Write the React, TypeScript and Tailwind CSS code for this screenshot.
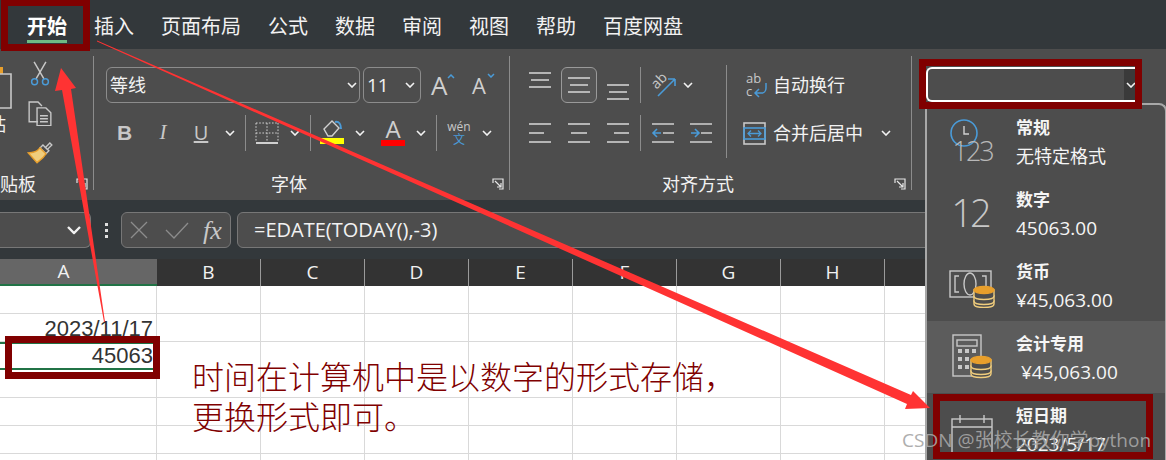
const cols = ["B", "C", "D", "E", "F", "G", "H", "I", "J", "K"];

function Chevron({ className = "" }: { className?: string }) {
  return (
    <svg width="10" height="6" viewBox="0 0 10 6" className={className} fill="none" stroke="#f2f2f2" strokeWidth="1.6">
      <path d="M1 1l4 4 4-4" />
    </svg>
  );
}

function Lines({ rows }: { rows: number[][] }) {
  return (
    <svg width="24" height="24" viewBox="0 0 24 24" stroke="#d0d0d0" strokeWidth="1.6">
      {rows.map((r, i) => (
        <line key={i} x1={r[0]} x2={r[1]} y1={r[2]} y2={r[2]} />
      ))}
    </svg>
  );
}

function Launcher() {
  return (
    <svg width="12" height="12" viewBox="0 0 12 12" fill="none" stroke="#e6e6e6" strokeWidth="1.2">
      <path d="M1 5V1h10v10H7" />
      <path d="M3 3l6 6M9 5v4H5" />
    </svg>
  );
}

function Coins({ x, y }: { x: number; y: number }) {
  return (
    <g transform={`translate(${x} ${y})`} stroke="#f0cd7d" strokeWidth="1.4" fill="#4d4d4d">
      <path d="M0 15v3c0 2 4 3.5 10 3.5S20 20 20 18v-3z" />
      <path d="M0 10v5c0 2 4 3.5 10 3.5S20 17 20 15v-5z" />
      <path d="M0 4v6c0 2 4 3.5 10 3.5S20 12 20 10V4z" />
      <ellipse cx="10" cy="4" rx="10" ry="3.6" fill="#e89f2c" stroke="#e89f2c" />
    </g>
  );
}

function MenuItem({ icon, title, sub, hi, cjk }: { icon: React.ReactNode; title: string; sub: string; hi?: boolean; cjk?: boolean }) {
  return (
    <div className={`flex h-[72px] ${hi ? "bg-[#5c5c5c]" : ""}`}>
      <div className="w-[89px] flex justify-center items-center shrink-0">{icon}</div>
      <div className="pt-[10px] text-[#f5f5f5] whitespace-pre">
        <div className="text-[17px] font-bold leading-[26px]">{title}</div>
        <div className={`${cjk ? "text-[18px]" : "text-[19px]"} leading-[30px]`}>{sub}</div>
      </div>
    </div>
  );
}

function RedBox({ className }: { className: string }) {
  return <div className={`absolute border-[7px] border-[#800000] ${className}`} />;
}

export default function App() {
  return (
    <div className="relative w-[1166px] h-[460px] overflow-hidden bg-white font-['Open_Sans','Noto_Sans_CJK_SC',sans-serif]">
      {/* tab strip */}
      <div className="h-[49px] bg-[#33383b] flex items-center gap-[27px] pl-[27px] pt-[5px] text-[20px] text-[#f2f2f2]">
        <div className="relative font-bold text-white">
          开始
          <div className="absolute left-0 right-0 -bottom-[1px] h-[3px] bg-[#6fbb84]" />
        </div>
        {["插入", "页面布局", "公式", "数据", "审阅", "视图", "帮助", "百度网盘"].map((t) => (
          <div key={t}>{t}</div>
        ))}
      </div>

      {/* ribbon */}
      <div className="h-[151px] bg-[#4d4d4d] flex pt-[7px] text-[#f2f2f2]">
        {/* clipboard */}
        <div className="w-[94px] h-[134px] border-r border-[#8c8c8c] flex flex-col shrink-0">
          <div className="flex h-[108px]">
            <div className="w-[27px] pt-[11px]">
              <svg width="12" height="42" viewBox="0 0 12 42" fill="none">
                <rect x="0" y="0" width="3" height="7" fill="#e89f2c" />
                <path d="M0 7h11v34H0" stroke="#c8c8c8" strokeWidth="1.6" />
              </svg>
              <div className="text-[18px] leading-[24px] -ml-[12px] mt-[3px]">贴</div>
            </div>
            <div className="flex flex-col items-center gap-[14px] pt-[5px]">
              <svg width="20" height="26" viewBox="0 0 20 26" fill="none" strokeWidth="1.5">
                <path d="M4 1l10 17M16 1L6 18" stroke="#c8c8c8" />
                <circle cx="4.5" cy="21" r="3" stroke="#4a9bd8" />
                <circle cx="15.5" cy="21" r="3" stroke="#4a9bd8" />
              </svg>
              <svg width="26" height="26" viewBox="0 0 26 26" fill="none" stroke="#c8c8c8" strokeWidth="1.4">
                <path d="M11 21H2V1h9l4 4" />
                <path d="M10 7h9l5 5v13H10z" />
                <path d="M13 15h8M13 18h8M13 21h8" />
              </svg>
              <svg width="26" height="24" viewBox="0 0 26 24" fill="none" strokeWidth="1.4">
                <path d="M18 8l5-5 2 2-5 5" stroke="#c8c8c8" />
                <path d="M16 5l6 6-3 3-6-6z" stroke="#c8c8c8" />
                <path d="M13 8l6 6c-3 5-7 7-9 9L1 13c4 0 9-1 12-5z" fill="#f0cd7d" stroke="#e89f2c" />
              </svg>
            </div>
          </div>
          <div className="flex items-center h-[24px] mt-[8px] text-[18px] whitespace-nowrap">
            <span>贴板</span>
            <span className="ml-[40px] flex">
              <Launcher />
            </span>
          </div>
        </div>

        {/* font */}
        <div className="w-[416px] h-[134px] border-r border-[#8c8c8c] flex flex-col shrink-0 pl-[12px] pt-[11px]">
          <div className="flex items-center h-[36px]">
            <div className="w-[254px] h-[36px] border border-[#8c8c8c] rounded-md flex items-center justify-between pl-[3px] pr-[2px] text-[18px]">
              <span>等线</span>
              <Chevron />
            </div>
            <div className="ml-[3px] w-[58px] h-[36px] border border-[#8c8c8c] rounded-md flex items-center justify-between pl-[3px] pr-[5px] text-[19px]">
              <span>11</span>
              <Chevron />
            </div>
            <div className="ml-[10px] w-[26px] text-[26px] text-[#d0d0d0] relative leading-none">
              A
              <svg width="8" height="5" viewBox="0 0 8 5" fill="none" stroke="#4a9bd8" strokeWidth="1.5" className="absolute left-[16px] top-[2px]">
                <path d="M1 4l3-3 3 3" />
              </svg>
            </div>
            <div className="ml-[15px] w-[26px] text-[22px] text-[#d0d0d0] relative leading-none">
              A
              <svg width="8" height="5" viewBox="0 0 8 5" fill="none" stroke="#4a9bd8" strokeWidth="1.5" className="absolute left-[15px] -top-[1px]">
                <path d="M1 1l3 3 3-3" />
              </svg>
            </div>
          </div>
          <div className="flex items-center h-[36px] mt-[12px] text-[#c8c8c8]">
            <div className="w-[37px] text-center font-bold text-[21px] font-['Liberation_Sans',sans-serif]">B</div>
            <div className="w-[40px] text-center italic text-[21px] font-['Liberation_Serif',serif]">I</div>
            <div className="w-[36px] text-center text-[20px] underline">U</div>
            <Chevron className="ml-[6px]" />
            <div className="w-px h-[36px] bg-[#8c8c8c] ml-[10px]" />
            <svg width="24" height="24" viewBox="0 0 24 24" fill="none" stroke="#d0d0d0" className="ml-[9px]">
              <path d="M1 2h22M1 12h22M1 2v19M12 2v19M23 2v19" strokeDasharray="1.6 1.6" />
              <path d="M1 22h22" strokeWidth="2" />
            </svg>
            <Chevron className="ml-[11px]" />
            <div className="w-px h-[36px] bg-[#8c8c8c] ml-[10px]" />
            <svg width="24" height="26" viewBox="0 0 24 26" fill="none" className="ml-[9px] -mt-[4px]">
              <path d="M4 11l8-8 7 7-7 8h-4z" stroke="#d0d0d0" strokeWidth="1.4" />
              <path d="M15 4c4-1 6 2 6 7" stroke="#4a9bd8" strokeWidth="2" />
              <rect x="0" y="20" width="24" height="6" fill="#ffff00" />
            </svg>
            <Chevron className="ml-[11px]" />
            <div className="relative ml-[16px] w-[24px] text-center text-[24px] leading-[26px] text-[#d0d0d0] h-[30px] -mt-[4px]">
              A
              <div className="absolute left-0 right-0 bottom-0 h-[6px] bg-[#ff0000]" />
            </div>
            <Chevron className="ml-[11px]" />
            <div className="w-px h-[36px] bg-[#8c8c8c] ml-[10px]" />
            <div className="ml-[10px] w-[24px] text-center leading-none">
              <div className="text-[12px] leading-[13px] text-[#c8c8c8]">wén</div>
              <div className="text-[12px] leading-[14px] text-[#4a9bd8]">文</div>
            </div>
            <Chevron className="ml-[11px]" />
          </div>
          <div className="flex items-center h-[24px] mt-[21px] text-[18px]">
            <div className="w-[366px] text-center">字体</div>
            <span className="ml-[20px] flex">
              <Launcher />
            </span>
          </div>
        </div>

        {/* alignment */}
        <div className="w-[402px] h-[134px] border-r border-[#8c8c8c] flex flex-col shrink-0 pl-[18px] pt-[11px]">
          <div className="flex h-[84px]">
            <div className="w-[199px] flex flex-col gap-[12px]">
              <div className="flex items-center h-[36px]">
                <div className="w-[24px] -mt-[10px]">
                  <Lines rows={[[1, 23, 5], [3, 21, 12], [1, 23, 19]]} />
                </div>
                <div className="ml-[9px] w-[36px] h-[36px] border border-[#9a9a9a] rounded-md flex items-center justify-center bg-[#555555]">
                  <Lines rows={[[1, 23, 5], [3, 21, 12], [1, 23, 19]]} />
                </div>
                <div className="ml-[9px] w-[24px] mt-[14px]">
                  <Lines rows={[[1, 23, 5], [3, 21, 12], [1, 23, 19]]} />
                </div>
                <div className="w-px h-[36px] bg-[#8c8c8c] ml-[10px]" />
                <svg width="26" height="26" viewBox="0 0 26 26" fill="none" className="ml-[9px]">
                  <path d="M8 24L25 7M25 7h-7M25 7v7" stroke="#4a9bd8" strokeWidth="1.6" />
                  <text x="3" y="15" fontSize="14" fill="#c8c8c8" transform="rotate(-45 8 12)">ab</text>
                </svg>
                <Chevron className="ml-[7px]" />
              </div>
              <div className="flex items-center h-[36px]">
                <Lines rows={[[1, 23, 3], [1, 16, 12], [1, 23, 21]]} />
                <div className="ml-[15px]">
                  <Lines rows={[[1, 23, 3], [4, 20, 12], [1, 23, 21]]} />
                </div>
                <div className="ml-[15px]">
                  <Lines rows={[[1, 23, 3], [8, 23, 12], [1, 23, 21]]} />
                </div>
                <div className="w-px h-[36px] bg-[#8c8c8c] ml-[10px]" />
                <svg width="24" height="24" viewBox="0 0 24 24" fill="none" className="ml-[10px]" strokeWidth="1.6">
                  <path d="M1 3h22M12 12h11M1 21h22" stroke="#d0d0d0" />
                  <path d="M10 12H2M6 8l-4 4 4 4" stroke="#4a9bd8" />
                </svg>
                <svg width="24" height="24" viewBox="0 0 24 24" fill="none" className="ml-[14px]" strokeWidth="1.6">
                  <path d="M1 3h22M12 12h11M1 21h22" stroke="#d0d0d0" />
                  <path d="M2 12h8M6 8l4 4-4 4" stroke="#4a9bd8" />
                </svg>
              </div>
            </div>
            <div className="w-px h-[93px] bg-[#8c8c8c] -mt-[2px] -ml-px" />
            <div className="pl-[16px] flex flex-col gap-[12px] text-[18px]">
              <div className="flex items-center h-[36px] gap-[5px] pl-[3px]">
                <svg width="22" height="26" viewBox="0 0 22 26" fill="none">
                  <text x="0" y="11" fontSize="13" fill="#c8c8c8">ab</text>
                  <text x="0" y="24" fontSize="13" fill="#c8c8c8">c</text>
                  <path d="M20 11v5c0 3-2 5-4 5H9M13 17l-4 4 4 4" stroke="#4a9bd8" strokeWidth="1.5" />
                </svg>
                <span>自动换行</span>
              </div>
              <div className="flex items-center h-[36px] gap-[7px]">
                <svg width="23" height="23" viewBox="0 0 23 23" fill="none">
                  <rect x="1" y="1" width="21" height="21" stroke="#c8c8c8" strokeWidth="1.6" />
                  <rect x="1" y="6" width="21" height="11" stroke="#4a9bd8" strokeWidth="1.6" />
                  <path d="M5 11.5h13M8 8.5l-3 3 3 3M15 8.5l3 3-3 3" stroke="#4a9bd8" strokeWidth="1.3" />
                </svg>
                <span>合并后居中</span>
                <Chevron className="ml-[11px]" />
              </div>
            </div>
          </div>
          <div className="flex items-center h-[24px] mt-[21px] text-[18px]">
            <div className="w-[340px] text-center">对齐方式</div>
            <span className="ml-[26px] flex">
              <Launcher />
            </span>
          </div>
        </div>

        {/* number format */}
        <div className="flex-1 pl-[14px] pt-[11px]">
          <div className="w-[210px] h-[35px] border-y-2 border-l-2 border-white rounded-l-md flex justify-end">
            <div className="w-[12px] bg-[#3a3a3a] flex items-center">
              <Chevron className="ml-[2px]" />
            </div>
          </div>
        </div>
      </div>

      {/* formula bar */}
      <div className="h-[59px] bg-[#33383b] flex items-start pt-[12px] text-[#f2f2f2]">
        <div className="w-[91px] h-[36px] bg-[#4d4d4d] border border-l-0 border-[#777777] rounded-r-md flex items-center justify-end pr-[11px] shrink-0">
          <Chevron className="scale-150" />
        </div>
        <div className="w-[30px] h-[36px] flex flex-col items-center justify-center gap-[3px]">
          <div className="w-[3px] h-[3px] bg-[#e0e0e0]" />
          <div className="w-[3px] h-[3px] bg-[#e0e0e0]" />
          <div className="w-[3px] h-[3px] bg-[#e0e0e0]" />
        </div>
        <div className="w-[110px] h-[36px] bg-[#4d4d4d] border border-[#777777] rounded-md flex items-center pl-[8px] shrink-0">
          <svg width="18" height="18" viewBox="0 0 18 18" stroke="#8c8c8c" strokeWidth="1.3" fill="none">
            <path d="M1 1l16 16M17 1L1 17" />
          </svg>
          <svg width="24" height="18" viewBox="0 0 24 18" stroke="#8c8c8c" strokeWidth="1.3" fill="none" className="ml-[17px]">
            <path d="M1 9l8 8L23 2" />
          </svg>
          <span className="ml-[14px] text-[26px] italic text-[#c8c8c8] font-['Liberation_Serif',serif]">fx</span>
        </div>
        <div className="ml-[6px] flex-1 h-[36px] bg-[#4d4d4d] border border-[#777777] rounded-md flex items-center pl-[16px] text-[20px]">
          =EDATE(TODAY(),-3)
        </div>
      </div>

      {/* column headers */}
      <div className="h-[27px] flex bg-[#333333] text-[19px] text-[#f2f2f2]">
        <div className="w-[157px] shrink-0 bg-[#666666] border-b-2 border-[#217346] flex items-center justify-center pr-[30px]">
          A
        </div>
        {cols.map((c) => (
          <div key={c} className="w-[104px] shrink-0 border-r border-[#9a9a9a] flex items-center justify-center">
            {c}
          </div>
        ))}
      </div>

      {/* cells */}
      <div className="text-[22px] text-[#333333] font-['Liberation_Sans',sans-serif]">
        {[0, 1, 2, 3, 4, 5, 6].map((r) => (
          <div key={r} className={`flex h-[28px] ${r === 2 ? "" : "border-b border-[#d9d9d9]"}`}>
            <div
              className={`w-[157px] shrink-0 border-r border-[#d9d9d9] text-right pr-[3px] ${
                r === 2 ? "border-y-2 border-y-[#217346] leading-[24px]" : "leading-[30px]"
              }`}
            >
              {r === 1 ? "2023/11/17" : r === 2 ? "45063" : ""}
            </div>
            {cols.map((c) => (
              <div key={c} className="w-[104px] shrink-0 border-r border-[#d9d9d9]" />
            ))}
          </div>
        ))}
      </div>

      {/* note on the sheet */}
      <div className="absolute left-[192px] top-[357px] text-[32px] font-light leading-[40px] text-[#800000] whitespace-nowrap">
        时间在计算机中是以数字的形式存储，
        <br />
        更换形式即可。
      </div>

      {/* number format dropdown */}
      <div className="absolute left-[925px] top-[103px] w-[242px] h-[357px] bg-[#4d4d4d] border-l-2 border-t-2 border-r-2 border-[#a8a8a8] rounded-tr-lg">
        <MenuItem
          cjk
          title="常规"
          sub="无特定格式"
          icon={
            <div className="relative w-[46px] h-[46px] text-[#b8b8b8]">
              <svg width="28" height="28" viewBox="0 0 28 28" fill="none" className="absolute left-[1px] top-[1px]">
                <circle cx="14" cy="14" r="13" stroke="#4a9bd8" strokeWidth="1.6" />
                <path d="M14 7v8h5" stroke="#d0d0d0" strokeWidth="1.4" />
              </svg>
              <span className="absolute left-[4px] top-[16px] text-[27px] tracking-[-2px] leading-[34px] font-light">123</span>
            </div>
          }
        />
        <MenuItem
          title="数字"
          sub="45063.00"
          icon={<span className="text-[38px] leading-none tracking-[-3px] font-light text-[#c8c8c8] -mt-[2px] -ml-[3px]">12</span>}
        />
        <MenuItem
          title="货币"
          sub="¥45,063.00"
          icon={
            <svg width="46" height="38" viewBox="0 0 46 38" fill="none" stroke="#c8c8c8" strokeWidth="1.4" className="mt-[8px]">
              <rect x="1" y="1" width="41" height="26" />
              <path d="M10 6H6v16h4M33 6h4v16h-4" />
              <ellipse cx="21" cy="14" rx="6" ry="11" />
              <Coins x="25" y="16" />
            </svg>
          }
        />
        <MenuItem
          hi
          title="会计专用"
          sub=" ¥45,063.00"
          icon={
            <svg width="44" height="46" viewBox="0 0 44 46" fill="none" stroke="#c8c8c8" strokeWidth="1.4" className="ml-[3px]">
              <rect x="2" y="1" width="28" height="41" />
              <rect x="6" y="6" width="20" height="6" />
              <path d="M7 17h4M14 17h4M21 17h4M7 25h4M14 25h4M7 33h4M14 33h4" strokeWidth="4" />
              <Coins x="20" y="22" />
            </svg>
          }
        />
        <MenuItem
          title="短日期"
          sub="2023/5/17"
          icon={
            <svg width="42" height="42" viewBox="0 0 42 42" fill="none" stroke="#c8c8c8" strokeWidth="1.4" className="mt-[12px]">
              <rect x="1" y="5" width="40" height="36" />
              <path d="M1 13h40M9 1v8M33 1v8" />
            </svg>
          }
        />
      </div>

      {/* arrows */}
      <svg width="1166" height="460" viewBox="0 0 1166 460" className="absolute left-0 top-0">
        <polygon points="97,40.5 97,41.5 907,404 905,409 930,408 913,391 911,395" fill="#ff3333" />
        <polygon points="105,322 104,322 62,90 55,91 61,68 76,88 71,89" fill="#ff3333" />
      </svg>

      <RedBox className="left-[1px] top-[-1px] w-[89px] h-[52px]" />
      <RedBox className="left-[919px] top-[59px] w-[223px] h-[50px]" />
      <RedBox className="left-[933px] top-[394px] w-[220px] h-[65px]" />
      <RedBox className="left-[5px] top-[336px] w-[155px] h-[43px]" />

      {/* watermark */}
      <div className="absolute left-[902px] top-[428px] text-[19px] leading-[24px] text-[#a6a6a6] whitespace-nowrap opacity-90">
        CSDN @张校长教你学python
      </div>
    </div>
  );
}
